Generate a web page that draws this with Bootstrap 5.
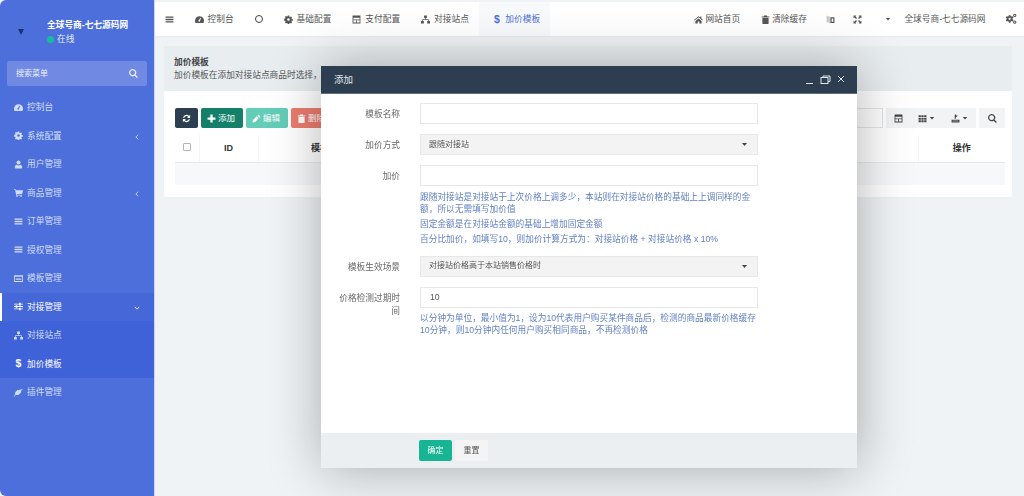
<!DOCTYPE html>
<html lang="zh">
<head>
    <meta charset="UTF-8">
    <meta name="viewport" content="width=device-width, initial-scale=1.0">
    <title>加价模板</title>
    <link href="https://cdn.jsdelivr.net/npm/bootstrap@5.3.1/dist/css/bootstrap.min.css" rel="stylesheet">
    <style>
        html, body { height: 100%; }
        body { background: #eff3f6; font: 8.7px/1.4 "Liberation Sans", "Noto Sans CJK SC", sans-serif; color: #555; overflow: hidden; }
        .ico { width: 9px; height: 9px; fill: currentColor; flex: none; line-height: 9px; }
        .ico-caret { width: 6px; height: 6px; }
        .ico-dollar { font-size: 10.5px; font-weight: 700; }
        .app-shell { height: 496px; }

        .side-bar { width: 154px; flex: none; background: #4c6fdb; color: #d3dcf7; border-radius: 6px 0 0 6px; box-shadow: 1px 0 0 #c9d6f7; }
        .side-user { height: 61px; padding: 19px 0 0 47px; color: #fff; }
        .side-user b { font-weight: 700; display: block; line-height: 13px; }
        .side-logo { left: 18px; top: 29px; border: 3.500px solid transparent; border-top: 6px solid #1d3272; border-bottom: 0; }
        .side-online { line-height: 15px; color: #e6ebfb; }
        .side-online i { width: 7px; height: 7px; border-radius: 50%; background: #18bc9c; margin: 0 3px 0 0; }
        .side-search { height: 25px; margin: 0 7px 7px; padding: 0 9px; background: #7089e3; border-radius: 2px; font-size: 8px; color: #eef1fc; }
        .side-item { height: 28.5px; padding-left: 14px; gap: 4px; color: #d3dcf7; }
        .side-item .arrow { width: 6px; height: 6px; margin: 2px 14px 0 auto; }
        .side-open { background: #4567d8; color: #fff; box-shadow: inset 2px 0 0 #fff; }
        .side-sub { background: #3f62d8; }
        .side-now { color: #fff; }

        .top-bar { height: 34px; margin-top: 2px; background: #fff; color: #555; box-shadow: 0 1px 2px rgba(0, 0, 0, .04); }
        .top-item { height: 100%; padding: 0 10.500px; gap: 4px; white-space: nowrap; }
        .top-now { background: #f8f9fa; color: #4c6fdb; padding: 0 10px 0 13px; }
        .top-ring { width: 8px; height: 8px; border: 1.4px solid #444; border-radius: 50%; }
        .top-home { padding-right: 9px; gap: 2px; margin-right: 1px; }
        .top-clear { gap: 2.500px; }
        .top-lang { padding: 0 9px; }
        .top-full { padding: 0 12.500px 0 9px; }
        .top-name { gap: 13px; }
        .top-gear { padding: 0 7px 0 9px; }
        .top-gear .ico { width: 12px; height: 12px; }

        .work-area { padding: 10px 12px 0 10px; }
        .page-card { background: #fff; border-radius: 2px; height: 151px; }
        .page-head { height: 45px; padding: 10px 10px 0; background: #e8edf0; line-height: 13px; }
        .page-head b { display: block; color: #444; }
        .page-body { padding: 17px 7px 0 11px; }
        .tool-row { gap: 3px; }
        .tool-btn { height: 20px; font-size: 8.5px; padding: 0 6px; border: 0; border-radius: 2px; color: #fff; gap: 2px; white-space: nowrap; }
        .tool-dark { background: #2c3e50; width: 23px; justify-content: center; }
        .tool-add { background: #148069; width: 42px; }
        .tool-edit { background: #63cdb7; width: 42px; }
        .tool-del { background: #ec7c6f; width: 42px; }
        .tool-find { width: 120px; height: 20px; background: #fff; border: 1px solid #e3e6e9; margin-right: 3px; }
        .tool-grey { height: 20px; background: #f1f3f5; color: #444; border: 0; padding: 0; justify-content: center; gap: 2px; }
        .tool-w25 { width: 25px; }
        .tool-w33 { width: 33px; }
        .tool-w34 { width: 34px; }
        .tool-w26 { width: 26px; margin-left: 3px; }
        .grid-table { width: 100%; margin: 7px 0 0; table-layout: fixed; }
        .grid-table th { height: 27px; padding: 0; text-align: center; vertical-align: middle; font-size: 9px; color: #333; border: 0; border-bottom: 1px solid #e8eaec; }
        .grid-table th + th { border-left: 1px solid #f4f5f6; }
        .grid-table td { height: 23px; padding: 0; background: #f6f8f9; border: 0; }
        .grid-check { width: 8px; height: 8px; border: 1px solid #b5b5b5; border-radius: 1px; display: inline-block; }
        .col-box { width: 24px; }
        .col-id { width: 59px; }
        .col-name { width: 142px; }
        .col-act { width: 87px; }

        .layer-win { left: 321px; top: 66px; width: 536px; height: 402px; background: #fff; box-shadow: 1px 1px 50px rgba(0, 0, 0, .3); z-index: 10; }
        .layer-head { height: 28px; padding: 0 13px; background: #2c3e50; color: #e4e8ec; font-size: 9.5px; border-bottom: 1px solid #5d6f80; }
        .layer-body { padding-top: 9px; }
        .form-line { margin-bottom: 10px; }
        .form-name { width: 66px; margin: 0 20px 0 13px; text-align: right; line-height: 13px; padding-top: 5px; color: #666; flex: none; }
        .form-main { width: 338px; }
        .form-main .form-control, .form-main .form-select { height: 21px; min-height: 0; padding: 0 8px; font-size: 8.7px; color: #555; border-radius: 0; border: 1px solid #e6e8ea; box-shadow: none; }
        .form-main .form-control { padding-left: 9px; }
        .form-main .form-select { background-color: #f3f3f3; font-size: 8px; background-size: 5px 3px; background-position: right 10px center; background-image: url("data:image/svg+xml,%3Csvg xmlns='http://www.w3.org/2000/svg' viewBox='0 0 5 3'%3E%3Cpath d='M0 0h5L2.5 3z' fill='%23444'/%3E%3C/svg%3E"); }
        .form-tip { color: #5f7fc4; line-height: 12.4px; margin: 0 0 3px; }
        .tip-gap { padding-top: 4px; }
        .tip-first { padding-top: 5px; }
        .tip-first .form-tip:first-child { margin-bottom: 2px; }
        .layer-foot { height: 35px; margin-top: auto; padding-left: 98px; gap: 3px; background: #eceff1; }
        .foot-btn { width: 33px; height: 21px; padding: 0; font-size: 8px; border: 0; border-radius: 2px; }
        .foot-ok { background: #18b595; color: #fff; }
        .foot-reset { background: #f4f4f4; color: #555; }
    </style>
</head>
<body>
<svg class="d-none">
    <symbol id="i-gauge" viewBox="0 0 16 16"><path d="M8 2a8 8 0 0 0-8 8c0 1.500.4 2.900 1.100 4h13.800A8 8 0 0 0 8 2zm.9 8.600a1.400 1.400 0 1 1-1.800-1.500l2.500-4 1 .5z"/></symbol>
    <symbol id="i-cog" viewBox="0 0 16 16"><path d="M6.800 1h2.400l.4 2 1.300.6 1.700-1.100 1.700 1.700-1.100 1.700.6 1.300 2 .4v2.400l-2 .4-.6 1.300 1.100 1.700-1.700 1.700-1.700-1.100-1.300.6-.4 2H6.800l-.4-2-1.300-.6-1.700 1.100-1.700-1.700 1.100-1.700-.6-1.300-2-.4V6.800l2-.4.6-1.300-1.100-1.700 1.700-1.700 1.700 1.100 1.300-.6zM8 5.600a2.400 2.400 0 1 0 0 4.800 2.400 2.400 0 0 0 0-4.800z"/></symbol>
    <symbol id="i-user" viewBox="0 0 16 16"><circle cx="8" cy="4.500" r="3.500"/><path d="M2.500 15c-.8 0-1-.7-1-1.500C1.500 10.500 3 8.500 4.800 8.500c1 .8 2 1.200 3.200 1.200s2.200-.4 3.200-1.200c1.800 0 3.300 2 3.300 5 0 .8-.2 1.500-1 1.500z"/></symbol>
    <symbol id="i-cart" viewBox="0 0 16 16"><path d="M0 2h3l.5 2H16l-1.500 6.500H5l.3 1.500h9v1.400H4L2 3.400H0z"/><circle cx="5.500" cy="14.500" r="1.400"/><circle cx="12.500" cy="14.500" r="1.400"/></symbol>
    <symbol id="i-bars" viewBox="0 0 16 16"><path d="M1 2.500h14v2.400H1zm0 4.300h14v2.400H1zm0 4.300h14v2.400H1z"/></symbol>
    <symbol id="i-list" viewBox="0 0 16 16"><path fill-rule="evenodd" d="M0 2h16v12H0zm1.500 3v7.500h13V5zM3 7h10v1.200H3zm0 2.500h10v1.200H3z"/></symbol>
    <symbol id="i-slide" viewBox="0 0 16 16"><path d="M0 3h9V1.500h3V3h4v1.500h-4V6H9V4.500H0zm0 4.300h3V5.800h3v1.500h10v1.500H6v1.500H3V8.800H0zm0 4.300h9v-1.500h3v1.500h4v1.500h-4v1.500H9v-1.500H0z"/></symbol>
    <symbol id="i-site" viewBox="0 0 16 16"><path d="M5.500 1h5v4.500H8.700V7.500h5V10.500H16V15h-5v-4.500h1.500V8.700h-9v1.800H5V15H0v-4.500h2.300V7.500h5.200V5.500h-2z"/></symbol>
    <symbol id="i-plug" viewBox="0 0 16 16"><path d="M16 1.500 12 6l1 1-4.500 5C6 13 4 12.500 3 12l-2 3.500L0 14l2-3c-.5-1.500 0-3.500 1-4.500l4-3.500 1 1z"/></symbol>
    <symbol id="i-table" viewBox="0 0 16 16"><path fill-rule="evenodd" d="M1 1h14v14H1zm1.500 4v3h11V5zm0 4.300v4.200h4.800V9.300zm6.200 0v4.200h4.800V9.300z"/></symbol>
    <symbol id="i-home" viewBox="0 0 16 16"><path d="M8 2 0 8.800l1 1L8 4l7 5.800 1-1-3-2.500V2.500h-2v2.100zM2.500 10.500 8 6l5.500 4.500V15H9.500v-3.500h-3V15h-4z"/></symbol>
    <symbol id="i-trash" viewBox="0 0 16 16"><path d="M5.500 1h5l.8 1.500H15V4H1V2.500h3.700zM2.500 5h11v9.500A1.500 1.500 0 0 1 12 16H4a1.500 1.500 0 0 1-1.500-1.500z"/></symbol>
    <symbol id="i-grid" viewBox="0 0 16 16"><path d="M1 2h4v3.500H1zm5 0h4v3.500H6zm5 0h4v3.500h-4zM1 6.500h4V10H1zm5 0h4V10H6zm5 0h4V10h-4zM1 11h4v3.500H1zm5 0h4v3.500H6zm5 0h4v3.500h-4z"/></symbol>
    <symbol id="i-out" viewBox="0 0 16 16"><path d="M7 1h2v1.500h3L10 5.500H8L9.500 4H8.500v4.500h-2V4zM1 10h14v5H1zm2 2v1h10v-1z"/></symbol>
    <symbol id="i-expand" viewBox="0 0 16 16"><path d="M1 1h5L4.500 2.800 7 5.300 5.300 7 2.800 4.500 1 6zm14 0v5l-1.800-1.500L10.700 7 9 5.300l2.500-2.500L10 1zM1 15v-5l1.800 1.500L5.300 9 7 10.700l-2.500 2.500L6 15zm14 0h-5l1.500-1.800L9 10.700 10.700 9l2.500 2.500L15 10z"/></symbol>
    <symbol id="i-lang" viewBox="0 0 16 16"><path d="M1 1 8 3.500V15L1 12.500z" fill-opacity=".3"/><path d="M8 4h7v10H8zm2 2v6h3V6z"/></symbol>
    <symbol id="i-cogs" viewBox="0 0 16 16"><path fill-rule="evenodd" d="M5 3 7 2.600l.6 1.600 1.100.6L10.300 4.200l1.100 1.800-1.300 1.100.1 1.300 1.200 1.100-1.100 1.800-1.600-.6-1.100.7L7.200 13H5.200l-.4-1.700-1.100-.7-1.600.6L1 9.400l1.200-1.100V7.100L1 6l1.100-1.800 1.600.6 1-.6zM6.200 6.200a1.500 1.500 0 1 0 0 3 1.500 1.500 0 0 0 0-3z"/><path fill-rule="evenodd" d="M13 1a2.200 2.200 0 1 1 0 4.400A2.200 2.200 0 0 1 13 1zm0 1.400a.8.8 0 1 0 0 1.600.8.8 0 0 0 0-1.600zM13 10a2.200 2.200 0 1 1 0 4.400 2.200 2.200 0 0 1 0-4.400zm0 1.400a.8.8 0 1 0 0 1.600.8.8 0 0 0 0-1.600z"/></symbol>
    <symbol id="i-search" viewBox="0 0 16 16"><path fill-rule="evenodd" d="M6.500 0a6.500 6.500 0 0 1 5.200 10.400l4 4-1.600 1.600-4-4A6.500 6.500 0 1 1 6.500 0zm0 2.200a4.300 4.300 0 1 0 0 8.600 4.300 4.300 0 0 0 0-8.600z"/></symbol>
    <symbol id="i-refresh" viewBox="0 0 16 16"><path d="M14.500 1.500V7H9l2-2a4.300 4.300 0 0 0-7 1.500H1.700A6.500 6.500 0 0 1 12.600 3.400zM1.500 14.500V9H7l-2 2a4.300 4.300 0 0 0 7-1.500h2.300a6.500 6.500 0 0 1-10.900 3.100z"/></symbol>
    <symbol id="i-plus" viewBox="0 0 16 16"><path d="M6 1h4v5h5v4h-5v5H6v-5H1V6h5z"/></symbol>
    <symbol id="i-pen" viewBox="0 0 16 16"><path d="m11.500 1 3.500 3.500-2 2L9.500 3zM8.500 4 12 7.500 5 14.500l-4 .5.500-4z"/></symbol>
    <symbol id="i-left" viewBox="0 0 8 8"><path d="M5.500 1 2.500 4l3 3" fill="none" stroke="currentColor" stroke-width="1.200"/></symbol>
    <symbol id="i-down" viewBox="0 0 8 8"><path d="M1 2.500 4 5.500l3-3" fill="none" stroke="currentColor" stroke-width="1.200"/></symbol>
    <symbol id="i-caret" viewBox="0 0 8 8"><path d="M1 2.500h6L4 6z"/></symbol>
</svg>

<div class="app-shell d-flex">
    <aside class="side-bar position-relative">
        <div class="side-user">
            <span class="side-logo position-absolute"></span>
            <b>全球号商-七七源码网</b>
            <div class="side-online d-flex align-items-center"><i class="d-inline-block"></i>在线</div>
        </div>
        <div class="side-search d-flex align-items-center justify-content-between">
            <span>搜索菜单</span>
            <svg class="ico"><use href="#i-search"/></svg>
        </div>
        <div class="side-item d-flex align-items-center"><svg class="ico"><use href="#i-gauge"/></svg>控制台</div>
        <div class="side-item d-flex align-items-center"><svg class="ico"><use href="#i-cog"/></svg>系统配置<svg class="ico arrow"><use href="#i-left"/></svg></div>
        <div class="side-item d-flex align-items-center"><svg class="ico"><use href="#i-user"/></svg>用户管理</div>
        <div class="side-item d-flex align-items-center"><svg class="ico"><use href="#i-cart"/></svg>商品管理<svg class="ico arrow"><use href="#i-left"/></svg></div>
        <div class="side-item d-flex align-items-center"><svg class="ico"><use href="#i-bars"/></svg>订单管理</div>
        <div class="side-item d-flex align-items-center"><svg class="ico"><use href="#i-bars"/></svg>授权管理</div>
        <div class="side-item d-flex align-items-center"><svg class="ico"><use href="#i-list"/></svg>模板管理</div>
        <div class="side-item side-open d-flex align-items-center"><svg class="ico"><use href="#i-slide"/></svg>对接管理<svg class="ico arrow"><use href="#i-down"/></svg></div>
        <div class="side-sub">
            <div class="side-item d-flex align-items-center"><svg class="ico"><use href="#i-site"/></svg>对接站点</div>
            <div class="side-item side-now d-flex align-items-center"><span class="ico ico-dollar text-center">$</span>加价模板</div>
        </div>
        <div class="side-item d-flex align-items-center"><svg class="ico"><use href="#i-plug"/></svg>插件管理</div>
    </aside>

    <div class="flex-grow-1 d-flex flex-column">
        <nav class="top-bar d-flex align-items-center">
            <div class="top-item d-flex align-items-center"><svg class="ico"><use href="#i-bars"/></svg></div>
            <div class="top-item d-flex align-items-center"><svg class="ico"><use href="#i-gauge"/></svg>控制台</div>
            <div class="top-item d-flex align-items-center"><span class="top-ring"></span></div>
            <div class="top-item d-flex align-items-center"><svg class="ico"><use href="#i-cog"/></svg>基础配置</div>
            <div class="top-item d-flex align-items-center"><svg class="ico"><use href="#i-table"/></svg>支付配置</div>
            <div class="top-item d-flex align-items-center"><svg class="ico"><use href="#i-site"/></svg>对接站点</div>
            <div class="top-item top-now d-flex align-items-center"><span class="ico ico-dollar text-center">$</span>加价模板</div>
            <div class="top-item top-home d-flex align-items-center ms-auto"><svg class="ico"><use href="#i-home"/></svg>网站首页</div>
            <div class="top-item top-clear d-flex align-items-center"><svg class="ico"><use href="#i-trash"/></svg>清除缓存</div>
            <div class="top-item top-lang d-flex align-items-center"><svg class="ico"><use href="#i-lang"/></svg></div>
            <div class="top-item top-full d-flex align-items-center"><svg class="ico"><use href="#i-expand"/></svg></div>
            <div class="top-item top-name d-flex align-items-center"><svg class="ico ico-caret"><use href="#i-caret"/></svg>全球号商-七七源码网</div>
            <div class="top-item top-gear d-flex align-items-center"><svg class="ico"><use href="#i-cogs"/></svg></div>
        </nav>

        <main class="work-area">
            <div class="page-card">
                <div class="page-head">
                    <b>加价模板</b>
                    加价模板在添加对接站点商品时选择，
                </div>
                <div class="page-body">
                    <div class="tool-row d-flex align-items-center">
                        <button class="btn tool-btn tool-dark d-flex align-items-center"><svg class="ico"><use href="#i-refresh"/></svg></button>
                        <button class="btn tool-btn tool-add d-flex align-items-center"><svg class="ico"><use href="#i-plus"/></svg>添加</button>
                        <button class="btn tool-btn tool-edit d-flex align-items-center"><svg class="ico"><use href="#i-pen"/></svg>编辑</button>
                        <button class="btn tool-btn tool-del d-flex align-items-center"><svg class="ico"><use href="#i-trash"/></svg>删除</button>
                        <div class="d-flex align-items-center ms-auto">
                            <div class="tool-find"></div>
                            <div class="btn-group">
                                <button class="btn tool-grey tool-w25 d-flex align-items-center rounded-0"><svg class="ico"><use href="#i-table"/></svg></button>
                                <button class="btn tool-grey tool-w33 d-flex align-items-center rounded-0"><svg class="ico"><use href="#i-grid"/></svg><svg class="ico ico-caret"><use href="#i-caret"/></svg></button>
                                <button class="btn tool-grey tool-w34 d-flex align-items-center rounded-0"><svg class="ico"><use href="#i-out"/></svg><svg class="ico ico-caret"><use href="#i-caret"/></svg></button>
                            </div>
                            <button class="btn tool-grey tool-w26 d-flex align-items-center rounded-0"><svg class="ico"><use href="#i-search"/></svg></button>
                        </div>
                    </div>
                    <table class="table grid-table">
                        <thead>
                        <tr>
                            <th class="col-box"><span class="grid-check"></span></th>
                            <th class="col-id">ID</th>
                            <th class="col-name">模板名称</th>
                            <th></th>
                            <th class="col-act">操作</th>
                        </tr>
                        </thead>
                        <tbody>
                        <tr><td colspan="5"></td></tr>
                        </tbody>
                    </table>
                </div>
            </div>
        </main>
    </div>
</div>

<div class="layer-win position-fixed d-flex flex-column">
    <div class="layer-head d-flex align-items-center justify-content-between">
        <span>添加</span>
        <svg width="38" height="10" viewBox="0 0 38 10" fill="none" stroke="#dfe4e8" stroke-width="1"><path d="M0 8.500h7"/><rect x="15" y="2.500" width="7" height="6"/><path d="M17 2.500V1h7v5.500h-2"/><path d="m32 1 6 6m0-6-6 6"/></svg>
    </div>
    <form class="layer-body flex-grow-1 d-flex flex-column">
        <div class="form-line d-flex">
            <label class="form-name">模板名称</label>
            <div class="form-main"><input type="text" class="form-control"></div>
        </div>
        <div class="form-line d-flex">
            <label class="form-name">加价方式</label>
            <div class="form-main"><select class="form-select"><option>跟随对接站</option></select></div>
        </div>
        <div class="form-line d-flex">
            <label class="form-name">加价</label>
            <div class="form-main">
                <input type="text" class="form-control">
                <div class="tip-first">
                    <p class="form-tip">跟随对接站是对接站于上次价格上调多少，本站则在对接站价格的基础上上调同样的金额，所以无需填写加价值</p>
                    <p class="form-tip">固定金额是在对接站金额的基础上增加固定金额</p>
                    <p class="form-tip mb-0">百分比加价，如填写10，则加价计算方式为：对接站价格 + 对接站价格 x 10%</p>
                </div>
            </div>
        </div>
        <div class="form-line d-flex">
            <label class="form-name">模板生效场景</label>
            <div class="form-main"><select class="form-select"><option>对接站价格高于本站销售价格时</option></select></div>
        </div>
        <div class="form-line d-flex">
            <label class="form-name">价格检测过期时间</label>
            <div class="form-main">
                <input type="text" class="form-control" value="10">
                <div class="tip-gap">
                    <p class="form-tip mb-0">以分钟为单位，最小值为1，设为10代表用户购买某件商品后，检测的商品最新价格缓存10分钟，则10分钟内任何用户购买相同商品，不再检测价格</p>
                </div>
            </div>
        </div>
        <div class="layer-foot d-flex align-items-center">
            <button type="button" class="btn foot-btn foot-ok">确定</button>
            <button type="button" class="btn foot-btn foot-reset">重置</button>
        </div>
    </form>
</div>
<script src="https://cdn.jsdelivr.net/npm/bootstrap@5.3.1/dist/js/bootstrap.bundle.min.js"></script>
</body>
</html>
